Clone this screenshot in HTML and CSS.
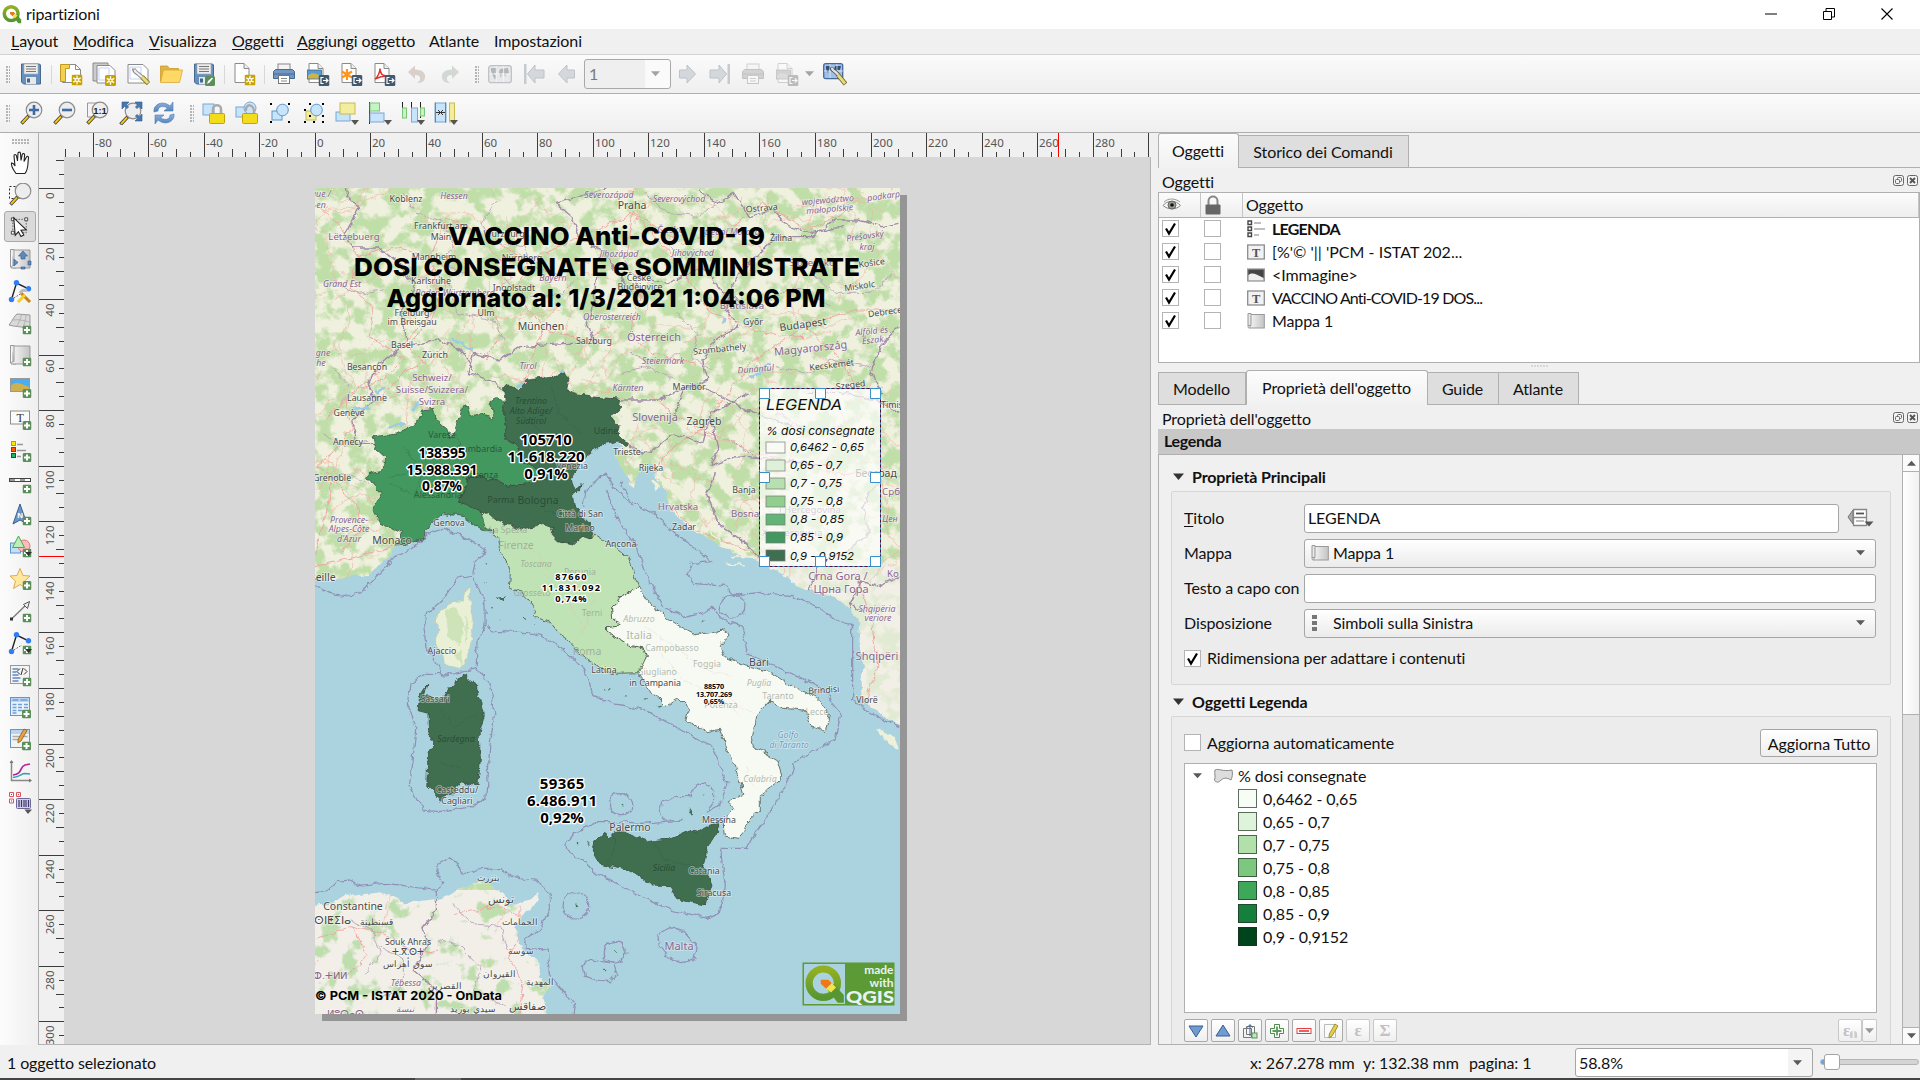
FILE: index.html
```html
<!DOCTYPE html>
<html lang="it">
<head>
<meta charset="utf-8">
<title>ripartizioni</title>
<link rel="stylesheet" href="styles.css">
</head>
<body>
<svg class="defs" width="0" height="0">
  <defs>
    <linearGradient id="gArrow" x1="0" y1="0" x2="0" y2="1"><stop offset="0" stop-color="#8fb2da"/><stop offset="1" stop-color="#4f82bd"/></linearGradient>
    <linearGradient id="gRoll"><stop offset="0" stop-color="#f4f4f4"/><stop offset="1" stop-color="#c4c4c4"/></linearGradient>
    <linearGradient id="gQ" x1="0" y1="0" x2="0" y2="1"><stop offset="0" stop-color="#93b023"/><stop offset="1" stop-color="#589632"/></linearGradient>
    <symbol id="b-plus" viewBox="0 0 9 9"><rect width="9" height="9" rx="1.5" fill="#5a8f5a"/><path d="M4.5 1.5v6M1.5 4.5h6" stroke="#fff" stroke-width="2"/></symbol>
    <symbol id="b-new" viewBox="0 0 11 11"><rect width="11" height="11" rx="1.5" fill="#c8a300"/><path d="M5.5 1.3v8.4M1.8 3.4l7.4 4.2M9.2 3.4L1.8 7.6" stroke="#fff" stroke-width="1.3"/><circle cx="5.5" cy="5.5" r="2" fill="#fff"/><circle cx="5.5" cy="5.5" r="1" fill="#c8a300"/></symbol>
    <symbol id="b-exp" viewBox="0 0 11 11"><rect width="11" height="11" rx="1.5" fill="#415a70"/><path d="M5 2.5H2.5v6H5M4.500 5.500h5M7.300 3.300l2.200 2.200-2.200 2.200" stroke="#fff" stroke-width="1.200" fill="none"/></symbol>
    <symbol id="sheet" viewBox="0 0 24 24"><path d="M5 1.500h9l5 5v14H5z" fill="#fff" stroke="#8a8a8a"/><path d="M14 1.500v5h5" fill="#eee" stroke="#8a8a8a"/></symbol>
    <symbol id="lens" viewBox="0 0 24 24"><path d="M10 14.500L2.500 22.500" stroke="#333" stroke-width="3.400"/><path d="M9 15.500L3 22" stroke="#f0c21c" stroke-width="2"/><circle cx="15" cy="9" r="7.800" fill="#ededed" stroke="#8c8c8c" stroke-width="1.200"/></symbol>
    <symbol id="save" viewBox="0 0 24 24"><path d="M2.500 2h18l1 1v19h-17l-2-2z" fill="#6690be" stroke="#48698f"/><rect x="5" y="2" width="14" height="10" fill="#ededed" stroke="#aaa" stroke-width=".6"/><path d="M7 4.500h10M7 7h10M7 9.500h10" stroke="#777" stroke-width="1"/><rect x="7" y="15" width="10" height="7" fill="#e8e8e8"/><rect x="8" y="16.500" width="3" height="4" fill="#44658c"/></symbol>
    <symbol id="saveas" viewBox="0 0 24 24"><use href="#save"/><rect x="13" y="14" width="10" height="10" rx="1.500" fill="#5a8f5a"/><path d="M15 22l1-3 4-3.500 1 1-3.500 4z" fill="#fff"/></symbol>
    <symbol id="newlay" viewBox="0 0 24 24"><path d="M3.500 2.500h13l5 5v13h-18z" fill="#fff" stroke="#8a8a8a"/><path d="M16.500 2.500v5h5" fill="none" stroke="#8a8a8a"/><path d="M1.500 2.500h9v4h-4v13h-5z" fill="#f3d04e" stroke="#c09a20"/><use href="#b-new" x="12.500" y="12.500" width="11" height="11"/></symbol>
    <symbol id="duplay" viewBox="0 0 24 24"><path d="M1 1h15v18H1z" fill="#ccc" stroke="#8a8a8a"/><path d="M5 3.500h13l5 5V21H5z" fill="#fff" stroke="#8a8a8a"/><path d="M7 6h10v12H7z" fill="none" stroke="#c6d2fa"/><use href="#b-new" x="13" y="13" width="11" height="11"/></symbol>
    <symbol id="mgr" viewBox="0 0 24 24"><path d="M2 2.500h15l5 5V21H2z" fill="#fff" stroke="#8a8a8a"/><path d="M4 5h11v12H4z" fill="none" stroke="#c6d2fa"/><path d="M8 6.500c0 4 3 4 4.500 5.500L18 17" stroke="#8a8a8a" stroke-width="4" fill="none"/><path d="M8.500 7.500c0 3 3 3 4.500 5l3.500 3" stroke="#eee" stroke-width="2.200" fill="none"/><path d="M16 15l6.500 6.500" stroke="#8d7a2c" stroke-width="4.600"/><path d="M16 15l6 6" stroke="#eadb7e" stroke-width="2.800"/></symbol>
    <symbol id="folder" viewBox="0 0 24 24"><path d="M1.500 20V4h7l2 2.500h9V9" fill="#e0b443" stroke="#c99a2a" stroke-width=".8"/><path d="M1.500 20.500L4.500 8h19l-3 12.500z" fill="#ffd865" stroke="#d8aa38" stroke-width=".8"/></symbol>
    <symbol id="addpage" viewBox="0 0 24 24"><use href="#sheet" x="-2"/><use href="#b-new" x="12.500" y="12.500" width="11" height="11"/></symbol>
    <symbol id="print" viewBox="0 0 24 24"><rect x="6" y="2" width="12" height="7" fill="#f4f4f4" stroke="#888"/><path d="M3.500 7.500h17l2 2v7h-21v-7z" fill="#7297c2" stroke="#496a91"/><path d="M2 12h20" stroke="#496a91"/><rect x="6.500" y="13.500" width="11" height="8" fill="#fff" stroke="#777"/><path d="M9 16.500h6M9 19h6" stroke="#888"/></symbol>
    <symbol id="eximg" viewBox="0 0 24 24"><use href="#sheet" x="-2"/><rect x="1.500" y="8" width="14" height="9" fill="#4f9fe0" stroke="#555" stroke-width=".7"/><path d="M2 16.500v-3c4-4 8-2 13 0v3z" fill="#cfb24a"/><use href="#b-exp" x="12.500" y="13" width="11" height="11"/></symbol>
    <symbol id="exsvg" viewBox="0 0 24 24"><use href="#sheet" x="-2"/><path d="M8 7v11M3 9.500l10 6M13 9.500l-10 6" stroke="#ff9418" stroke-width="2.200"/><use href="#b-exp" x="12.500" y="13" width="11" height="11"/></symbol>
    <symbol id="expdf" viewBox="0 0 24 24"><use href="#sheet" x="-2"/><path d="M3 17c3-2 5-7 5-10.500C8 12 11 14 15 14c-4 0-8 1-12 3" stroke="#e0322c" stroke-width="1.500" fill="none"/><use href="#b-exp" x="12.500" y="13" width="11" height="11"/></symbol>
    <symbol id="undo" viewBox="0 0 24 24"><path d="M3 10l7-6.500v4C17 7.500 21 11 20 16c-1 4-4 5-8 5 4-2 5-8-2-8v4z" fill="#d9d0cb"/></symbol>
    <symbol id="redo" viewBox="0 0 24 24"><path d="M21 10l-7-6.500v4C7 7.500 3 11 4 16c1 4 4 5 8 5-4-2-5-8 2-8v4z" fill="#d4d8d4"/></symbol>
    <symbol id="world" viewBox="0 0 24 24"><rect x=".7" y="3.700" width="22.600" height="17" rx="2.500" fill="#e6e8ea" stroke="#bfc1c4" stroke-width="1.300"/><path d="M3 6l6 0-1 5-2 0 2 3-1 4-2-4-2-5zM12 7l8-1 1 5-3 1-1 3-1-4-2 0-1 5-2-6z" fill="#b4b6b8"/><path d="M8.300 4v16M15.600 4v16M1 12h22" stroke="#f6f6f6" stroke-width=".8"/></symbol>
    <symbol id="worldset" viewBox="0 0 24 24"><rect x=".7" y="1.700" width="19" height="15" rx="2" fill="#9fc1e6" stroke="#44699a" stroke-width="1.300"/><path d="M3 4h4l-1 4-1 3-2-4zM12 4l6 0-1 4-3 0-1 4-2-4z" fill="#34507a"/><path d="M7 2v14M14 2v14M1 9h19" stroke="#e8f0fa" stroke-width=".7"/><path d="M8.500 5.500c0 3 3 3 4 4.500l3 3" stroke="#555" stroke-width="4" fill="none"/><path d="M9 6c0 3 3 3 4 4.500l3 3" stroke="#e4e4e4" stroke-width="2.400" fill="none"/><path d="M15 13l7.500 9" stroke="#6d642c" stroke-width="4.600"/><path d="M15 13l7 8.500" stroke="#eed97a" stroke-width="2.800"/></symbol>
    <symbol id="a-left" viewBox="0 0 24 24"><path d="M3.500 12L12 3v5h7.500v8H12v5z" fill="#d4d8dc" stroke="#bec3c8"/></symbol>
    <symbol id="a-first" viewBox="0 0 24 24"><rect x="2" y="2" width="2.500" height="20" fill="#c6cace"/><path d="M5.500 12L13 3v5h9v8h-9v5z" fill="#d4d8dc" stroke="#bec3c8"/></symbol>
    <symbol id="tri" viewBox="0 0 8 5"><path d="M0 0h8L4 4.600z" fill="currentColor"/></symbol>
    <symbol id="zin" viewBox="0 0 24 24"><use href="#lens"/><path d="M15 4v10M10 9h10" stroke="#3f6ca6" stroke-width="2.600"/></symbol>
    <symbol id="zout" viewBox="0 0 24 24"><use href="#lens"/><path d="M10 9h10" stroke="#3f6ca6" stroke-width="2.600"/></symbol>
    <symbol id="z11" viewBox="0 0 24 24"><path d="M2.500 2h12v14h-12z" fill="#f4f4f4" stroke="#999"/><use href="#lens"/><text x="15" y="12.600" text-anchor="middle" font-size="9.500" font-weight="700" font-family="Liberation Sans, sans-serif" fill="#222">1:1</text></symbol>
    <symbol id="zfull" viewBox="0 0 24 24"><use href="#lens" x="-1" y="1"/><path d="M3 1h7L3 8zM23 1h-7l7 7zM23 20h-7l7-7z" fill="#4878b0" stroke="#2d578a" stroke-width=".6"/><path d="M5 3l4 4M21 3l-4 4M21 18l-4-4" stroke="#4878b0" stroke-width="3"/></symbol>
    <symbol id="refresh" viewBox="0 0 24 24"><path d="M2 11C1 3 11-1 18 5l3-4v9h-9l3.500-3C10 4 6 6 6 10z" fill="url(#gArrow)" stroke="#4b7bb5" stroke-width=".6"/><path d="M22 13c1 8-9 12-16 6l-3 4v-9h9l-3.500 3c5.500 3 9.500 1 9.500-3z" fill="url(#gArrow)" stroke="#4b7bb5" stroke-width=".6"/></symbol>
    <symbol id="lock" viewBox="0 0 24 24"><rect x="1" y="3" width="11" height="11" fill="#c7e4fb" stroke="#7aa8cf"/><path d="M11 13V8c0-5 8-5 8 0v5" fill="none" stroke="#aaa" stroke-width="2.600"/><rect x="7.500" y="12.500" width="15" height="10" rx="1" fill="#f2dc1c" stroke="#c0a408"/></symbol>
    <symbol id="unlock" viewBox="0 0 24 24"><rect x="1" y="6" width="11" height="10" fill="#c7e4fb" stroke="#7aa8cf"/><circle cx="15" cy="7" r="6" fill="#c7e4fb" stroke="#7aa8cf"/><path d="M11 10c-1-8 9-8 8 3" fill="none" stroke="#aaa" stroke-width="2.400"/><rect x="7.500" y="12.500" width="15" height="10" rx="1" fill="#f2dc1c" stroke="#c0a408"/></symbol>
    <symbol id="grp" viewBox="0 0 24 24"><rect x="4" y="10" width="10" height="9" fill="#c7e4fb" stroke="#5d96c8"/><circle cx="14.500" cy="9" r="5.800" fill="#c7e4fb" stroke="#5d96c8"/><path d="M2 2h2v2H2zM20 2h2v2h-2zM2 20h2v2H2zM20 20h2v2h-2z"/></symbol>
    <symbol id="ungrp" viewBox="0 0 24 24"><rect x="4" y="10" width="10" height="9" fill="#f3eda0" stroke="#c8bb50"/><circle cx="14.500" cy="9" r="5.800" fill="#c7e4fb" stroke="#5d96c8"/><path d="M7 2h2v2H7zM20 2h2v2h-2zM2 8h2v2H2zM2 20h2v2H2zM11 20h2v2h-2zM20 20h2v2h-2zM20 14h2v2h-2zM7 14h2v2H7z"/></symbol>
    <symbol id="raise" viewBox="0 0 24 24"><rect x="1" y="11" width="14" height="9" fill="#c7e4fb" stroke="#7aa8cf"/><rect x="5" y="2" width="15" height="11" fill="#f3eda0" stroke="#c8bb50"/><path d="M16 19h8l-4 5z" fill="#555"/></symbol>
    <symbol id="align" viewBox="0 0 24 24"><path d="M1.500 1v22" stroke="#222"/><rect x="2" y="2" width="9.500" height="8" fill="#c4f3c4" stroke="#7cc47c"/><rect x="2" y="12" width="14" height="9" fill="#c7e4fb" stroke="#7aa8cf"/><path d="M16 19h8l-4 5z" fill="#555"/></symbol>
    <symbol id="distr" viewBox="0 0 24 24"><path d="M1.500 1v16M10.500 1v6M19.500 1v16" stroke="#222"/><rect x="1.500" y="7" width="4" height="10" fill="#c4f3c4" stroke="#7cc47c"/><rect x="10.500" y="7" width="6" height="14" fill="#c7e4fb" stroke="#7aa8cf"/><rect x="19.500" y="7" width="4" height="8" fill="#c4f3c4" stroke="#7cc47c"/><path d="M16 19h8l-4 5z" fill="#555"/></symbol>
    <symbol id="resize" viewBox="0 0 24 24"><rect x="1" y="2" width="11" height="19" fill="#c7e4fb" stroke="#7aa8cf"/><path d="M1.500 1.500v20M11.500 1.500v20" stroke="#5d8ab5"/><path d="M2 11.500h4M11 11.500H7M4 9l2.500 2.500L4 14M9 9l-2.500 2.500L9 14" stroke="#333" fill="none"/><rect x="15.500" y="2" width="5" height="19" fill="#f3eda0" stroke="#c8bb50"/><path d="M16 19h8l-4 5z" fill="#555"/></symbol>
    <symbol id="pan" viewBox="0 0 24 24"><path d="M8 22.500C6 19 3 16.500 3.500 12c1.500-.5 2.500 1 3.500 3L6 5c0-2 2-2 2.500 0l1 5L10 2.500c0-1.800 2.500-1.800 2.500 0l.5 7 1.300-6c.5-1.600 2.500-1 2.300.5L16 10.500 18.500 6c.8-1.400 2.300-.5 2 1C19.500 12 21 17 17 22.500z" fill="#fff" stroke="#222" stroke-width="1.100"/></symbol>
    <symbol id="zoomsel" viewBox="0 0 24 24"><path d="M1.500 3.500h12v12h-12z" fill="none" stroke="#222" stroke-dasharray="2 2"/><use href="#lens" y="-1"/></symbol>
    <symbol id="selitem" viewBox="0 0 24 24"><path d="M4.500 4.500h14v14h-14z" fill="none" stroke="#555" stroke-dasharray="1.500 1.500"/><path d="M3 3h3v3H3zM17 3h3v3h-3zM3 17h3v3H3z" fill="#fff" stroke="#444"/><path d="M5.500 3l13 12.500-5.500.3 3 5-3 1.700-2.700-5.200-3.300 4z" fill="#fff" stroke="#222" stroke-width="1.100"/></symbol>
    <symbol id="roll" viewBox="0 0 24 24"><path d="M5 3h17v18H5z" fill="url(#gRoll)" stroke="#999"/><path d="M2.500 2.500H6v16c-2 0-3 1-3 2.500h5M2.500 2.500V20" fill="#ededed" stroke="#999"/></symbol>
    <symbol id="mvcont" viewBox="0 0 24 24"><use href="#roll"/><path d="M15 4l4.500 5H17v3h-4V9h-2.500zM6 12l4 3.500L6 19zM23 14h-3v4h3zM13 20h4v2h-4z" fill="#5b89c0" stroke="#3d6593" stroke-width=".7"/></symbol>
    <symbol id="nodes" viewBox="0 0 24 24"><path d="M3.500 20.500L8.500 4l12.500 6" fill="none" stroke="#222" stroke-width="1.400"/><path d="M3.500 20.500L14 14" stroke="#555" stroke-dasharray="1.500 1.500"/><circle cx="3.500" cy="20.500" r="2.700" fill="#2e7df6"/><circle cx="8.500" cy="3.700" r="2.700" fill="#2e7df6"/><circle cx="20.500" cy="9.700" r="2.700" fill="#2e7df6"/></symbol>
    <symbol id="editnodes" viewBox="0 0 24 24"><use href="#nodes"/><path d="M13 14l9 9" stroke="#c98511" stroke-width="3"/><path d="M17 16l-7 7" stroke="#f2cf2c" stroke-width="3"/><path d="M12 14c2-3 5-3 7-2" stroke="#bbb" stroke-width="3" fill="none"/></symbol>
    <symbol id="p3d" viewBox="0 0 24 24"><path d="M1 14C5 9 6 5 9 3l13 1v14l-5-1C12 15 7 16 1 14z" fill="#d9d9d9" stroke="#999"/><path d="M5 9c6-1 12 1 17 2M14 3c-2 5-3 9-5 12M18 4c0 5-2 9-3 13" stroke="#aaa" fill="none" stroke-width=".8"/><use href="#b-plus" x="14.500" y="14.500" width="9" height="9"/></symbol>
    <symbol id="addmap" viewBox="0 0 24 24"><use href="#roll"/><use href="#b-plus" x="14.500" y="14.500" width="9" height="9"/></symbol>
    <symbol id="addpic" viewBox="0 0 24 24"><rect x="2.500" y="3.500" width="19" height="13" fill="#4dacf0" stroke="#999"/><path d="M3 16V11c4-5 8-3 18 1v4z" fill="#cbb150"/><use href="#b-plus" x="14.500" y="14" width="9" height="9"/></symbol>
    <symbol id="addlab" viewBox="0 0 24 24"><rect x="2.500" y="4" width="19" height="13" fill="#fafafa" stroke="#8e8e8e"/><text x="12" y="14.500" font-size="12" font-family="Liberation Serif, serif" text-anchor="middle" fill="#333">T</text><use href="#b-plus" x="14.500" y="14" width="9" height="9"/></symbol>
    <symbol id="addleg" viewBox="0 0 24 24"><rect x="3.500" y="2.500" width="4" height="4" fill="#ffe600" stroke="#e08a00"/><rect x="3.500" y="8.500" width="4" height="4" fill="#ff5a00" stroke="#b82800"/><rect x="3.500" y="14.500" width="4" height="4" fill="#1cb46a" stroke="#0b5c30"/><path d="M9 5.500h6M9 11.500h9M9 17.500h4" stroke="#999" stroke-width="1.500"/><use href="#b-plus" x="14.500" y="14" width="9" height="9"/></symbol>
    <symbol id="addbar" viewBox="0 0 24 24"><rect x="1.500" y="7.500" width="21" height="3" fill="#fff" stroke="#444"/><path d="M2 9h5M12 9h5" stroke="#999" stroke-width="2"/><use href="#b-plus" x="14.500" y="13.500" width="9" height="9"/></symbol>
    <symbol id="addnorth" viewBox="0 0 24 24"><path d="M12 1l7 20-7-4-7 4z" fill="#6a97c8" stroke="#3c5f8a"/><text x="12" y="15" font-size="8" font-weight="700" font-family="Liberation Sans, sans-serif" text-anchor="middle" fill="#fff">N</text><use href="#b-plus" x="14.500" y="13.500" width="9" height="9"/></symbol>
    <symbol id="addshape" viewBox="0 0 24 24"><rect x="2.500" y="8" width="10" height="10" fill="#bfe0fa" stroke="#5d96c8"/><circle cx="16" cy="11" r="6" fill="#fbb" stroke="#d77"/><path d="M10.500 1l6 11.500h-12z" fill="#b9efb9" stroke="#52a552"/><use href="#b-plus" x="14.500" y="13.500" width="9" height="9"/><path d="M17 17h7l-3.500 4z" fill="#333"/></symbol>
    <symbol id="addmark" viewBox="0 0 24 24"><path d="M12 1.500l3 7 7 .5-5.500 5 2 7.500L12 17.500 5.500 21.500l2-7.500L2 9l7-.5z" fill="#ffe9a0" stroke="#dfa94e"/><use href="#b-plus" x="14.500" y="14" width="9" height="9"/></symbol>
    <symbol id="addarrow" viewBox="0 0 24 24"><path d="M3.500 20L19 5" stroke="#777" stroke-width="1.300"/><path d="M21.500 2.500l-2 7-4-4z" fill="#eee" stroke="#555"/><rect x="2" y="18.500" width="3" height="3" fill="#333"/><use href="#b-plus" x="14.500" y="14.500" width="9" height="9"/></symbol>
    <symbol id="addnode" viewBox="0 0 24 24"><use href="#nodes"/><use href="#b-plus" x="14.500" y="14.500" width="9" height="9"/><path d="M17 18h7l-3.500 4z" fill="#333"/></symbol>
    <symbol id="addhtml" viewBox="0 0 24 24"><rect x="2.500" y="2.500" width="19" height="18" fill="#f4f4f4" stroke="#999"/><path d="M4.500 6h6M4.500 9h4M4.500 12h6M4.500 15h8M4.500 18h6" stroke="#5b89c8" stroke-width="1.500"/><path d="M12 5.500L9 8.500l3 3M16 5.500l3 3-3 3M15 5l-2 7" stroke="#333" fill="none"/><use href="#b-plus" x="14.500" y="14.500" width="9" height="9"/></symbol>
    <symbol id="addtab" viewBox="0 0 24 24"><rect x="2.500" y="2.500" width="19" height="18" fill="#eaf3fc" stroke="#6a94c4"/><rect x="3" y="3" width="18" height="4" fill="#b7d5f2"/><path d="M4.500 5h6M12.500 5h7M4.500 9.500h4M10 9.500h4M16 9.500h4M4.500 12.500h4M10 12.500h4M16 12.500h4M4.500 15.500h4M10 15.500h4M4.500 18h4" stroke="#6f9fd8" stroke-width="1.300"/><use href="#b-plus" x="14" y="14.500" width="9" height="9"/></symbol>
    <symbol id="addfix" viewBox="0 0 24 24"><rect x="2.500" y="2.500" width="19" height="18" fill="#f2f2f2" stroke="#6a94c4"/><rect x="3" y="3" width="18" height="4" fill="#b7d5f2"/><path d="M4.500 9.500h15M4.500 12.500h8" stroke="#aaa" stroke-width="1.300"/><path d="M16 2l3 1.500-6 10.500-3 2 0-3.500z" fill="#e9a441" stroke="#865c1d" stroke-width=".8"/><use href="#b-plus" x="14" y="14.500" width="9" height="9"/></symbol>
    <symbol id="chart" viewBox="0 0 24 24"><path d="M3.500 2v19.500h19" fill="none" stroke="#888" stroke-width="1.500"/><path d="M1.500 4l2-3 2 3zM21 19.500l3 2-3 2z" fill="#777"/><path d="M5 16c10-1 6-8 12-10l5-1" fill="none" stroke="#b8239b" stroke-width="1.700"/><path d="M5 18.500c8-1 8-4 12-4l5 .5" fill="none" stroke="#32a0b8" stroke-width="1.500"/></symbol>
    <symbol id="barcode" viewBox="0 0 24 24"><path d="M1.500 1.500h4v4h-4zM8.500 1.500h4v4h-4zM1.500 8h4v4h-4z" fill="#fff" stroke="#d95360"/><path d="M3 3h1v1H3zM10 3h1v1h-1zM3 9.500h1v1H3z" fill="#d22"/><rect x="8.500" y="7.500" width="14" height="10" rx="1" fill="#d6d2e8" stroke="#6d6796"/><path d="M11 9v7M13.500 9v7M16 9v7M18 9v7M20.500 9v7" stroke="#3b356e" stroke-width="1.200"/><path d="M16.500 18.500h7.500l-4 4.500z" fill="#555"/></symbol>
    <symbol id="t-leg" viewBox="0 0 18 18"><path d="M1 1h3.500v3.500H1zM1 7h3.500v3.500H1zM1 13h3.500v3.500H1z" fill="#fff" stroke="#444" stroke-width="1.400"/><path d="M7 3h7M7 9h11M7 15h5" stroke="#aaa" stroke-width="1.700"/></symbol>
    <symbol id="t-lab" viewBox="0 0 18 18"><rect x=".7" y="2" width="16.600" height="14" fill="#f2f2f2" stroke="#8c8c8c" stroke-width="1.300"/><text x="9" y="13.500" font-size="12.500" font-weight="700" font-family="Liberation Serif, serif" text-anchor="middle" fill="#555">T</text></symbol>
    <symbol id="t-img" viewBox="0 0 18 18"><rect x=".7" y="3" width="16.600" height="12" fill="#444" stroke="#999" stroke-width="1.300"/><path d="M1.400 14.400V9.500C4 5.500 9 8 16.600 12v2.400z" fill="#eee"/></symbol>
    <symbol id="t-map" viewBox="0 0 18 18"><rect x="3" y="2.500" width="14.300" height="13.500" fill="url(#gRoll)" stroke="#999"/><path d="M1 1.500h3v12H1zM1 13.500c0 2 0 2.500 2 2.500" fill="#e6e6e6" stroke="#999"/></symbol>
    <symbol id="float" viewBox="0 0 11 11"><rect x=".5" y=".5" width="10" height="10" rx="2" fill="#f4f4f4" stroke="#666"/><rect x="4.500" y="2.500" width="4" height="4" rx="1" fill="none" stroke="#666"/><rect x="2.500" y="4.500" width="4" height="4" rx="1" fill="#f4f4f4" stroke="#666"/></symbol>
    <symbol id="closeb" viewBox="0 0 11 11"><rect x=".5" y=".5" width="10" height="10" rx="2" fill="#f4f4f4" stroke="#666"/><path d="M3 3l5 5M8 3L3 8" stroke="#555" stroke-width="1.900"/></symbol>
    <symbol id="check" viewBox="0 0 17 17"><path d="M4 8.500l3 5L13 3.500" fill="none" stroke="#000" stroke-width="2.200"/></symbol>
    <symbol id="qlogo" viewBox="0 0 24 24"><circle cx="11" cy="11.500" r="8.300" fill="none" stroke="url(#gQ)" stroke-width="4.200"/><path d="M13.500 15.500l3.500-3.500 6 6.500v4.500h-3.500z" fill="#589632"/><path d="M9.500 9.500h4.500l2 2-3.300 3.300-3.200-3z" fill="#ee7913"/><path d="M12.700 14.800l3.300-3.300 2.500 2.500-3 3z" fill="#f0e64a"/></symbol>
  </defs>
</svg>

<div class="window">
  <header class="titlebar">
    <svg class="applogo"><use href="#qlogo"/></svg>
    <span class="apptitle">ripartizioni</span>
    <svg class="winbtn" viewBox="0 0 12 12"><path d="M0 6h12" stroke="#000"/></svg>
    <svg class="winbtn" viewBox="0 0 12 12"><path d="M.5 3.500h8v8h-8zM3 3V.5h8.500V9H9" fill="none" stroke="#000"/></svg>
    <svg class="winbtn" viewBox="0 0 12 12"><path d="M.5.5l11 11M11.500.5l-11 11" stroke="#000" stroke-width="1.100"/></svg>
  </header>
  <nav class="menubar">
    <span><u>L</u>ayout</span><span><u>M</u>odifica</span><span><u>V</u>isualizza</span><span><u>O</u>ggetti</span><span><u>A</u>ggiungi oggetto</span><span>Atlante</span><span>Impostazioni</span>
  </nav>
  <div class="toolbar">
    <i class="grip"></i>
    <svg class="ic"><use href="#save"/></svg><i class="sep"></i>
    <svg class="ic"><use href="#newlay"/></svg><svg class="ic"><use href="#duplay"/></svg><svg class="ic"><use href="#mgr"/></svg><svg class="ic"><use href="#folder"/></svg><svg class="ic"><use href="#saveas"/></svg><i class="sep"></i>
    <svg class="ic"><use href="#addpage"/></svg><i class="sep"></i>
    <svg class="ic"><use href="#print"/></svg><svg class="ic"><use href="#eximg"/></svg><svg class="ic"><use href="#exsvg"/></svg><svg class="ic"><use href="#expdf"/></svg><svg class="ic"><use href="#undo"/></svg><svg class="ic"><use href="#redo"/></svg>
    <i class="grip second"></i>
    <svg class="ic"><use href="#world"/></svg><svg class="ic"><use href="#a-first"/></svg><svg class="ic"><use href="#a-left"/></svg>
    <div class="pagebox"><span>1</span><svg class="tri dim"><use href="#tri"/></svg></div>
    <svg class="ic flip"><use href="#a-left"/></svg><svg class="ic flip"><use href="#a-first"/></svg><svg class="ic faded"><use href="#print"/></svg><svg class="ic faded"><use href="#eximg"/></svg>
    <svg class="tri dim"><use href="#tri"/></svg><svg class="ic last"><use href="#worldset"/></svg>
  </div>
  <div class="toolbar">
    <i class="grip"></i>
    <svg class="ic"><use href="#zin"/></svg><svg class="ic"><use href="#zout"/></svg><svg class="ic"><use href="#z11"/></svg><svg class="ic"><use href="#zfull"/></svg><svg class="ic"><use href="#refresh"/></svg>
    <i class="grip third"></i>
    <svg class="ic"><use href="#lock"/></svg><svg class="ic"><use href="#unlock"/></svg><svg class="ic"><use href="#grp"/></svg><svg class="ic"><use href="#ungrp"/></svg><svg class="ic"><use href="#raise"/></svg><svg class="ic"><use href="#align"/></svg><svg class="ic"><use href="#distr"/></svg><svg class="ic"><use href="#resize"/></svg>
  </div>

  <main class="main">
    <aside class="tools">
      <i class="hgrip"></i>
      <svg><use href="#pan"/></svg><svg><use href="#zoomsel"/></svg><svg class="on"><use href="#selitem"/></svg><svg><use href="#mvcont"/></svg><svg><use href="#editnodes"/></svg><svg><use href="#p3d"/></svg><svg><use href="#addmap"/></svg><svg><use href="#addpic"/></svg><svg><use href="#addlab"/></svg><svg><use href="#addleg"/></svg><svg><use href="#addbar"/></svg><svg><use href="#addnorth"/></svg><svg><use href="#addshape"/></svg><svg><use href="#addmark"/></svg><svg><use href="#addarrow"/></svg><svg><use href="#addnode"/></svg><svg><use href="#addhtml"/></svg><svg><use href="#addtab"/></svg><svg><use href="#addfix"/></svg><svg><use href="#chart"/></svg><svg><use href="#barcode"/></svg>
    </aside>
    <section class="view">
      <svg class="hruler" id="hruler" width="1111" height="24"></svg>
      <svg class="vruler" id="vruler" width="25" height="888"></svg>
      <div class="canvas">
        <svg class="sheet" width="585" height="826" viewBox="315 188 585 826">
          <defs>
            <filter id="veg" x="0" y="0" width="100%" height="100%" color-interpolation-filters="sRGB"><feTurbulence type="fractalNoise" baseFrequency=".06" numOctaves="6" seed="7"/><feColorMatrix values="0 0 0 0 .75  0 0 0 0 .87  0 0 0 0 .66  6 0 0 0 -2.6"/></filter>
            <filter id="dry" x="0" y="0" width="100%" height="100%" color-interpolation-filters="sRGB"><feTurbulence type="fractalNoise" baseFrequency=".05" numOctaves="4" seed="11"/><feColorMatrix values="0 0 0 0 .75  0 0 0 0 .87  0 0 0 0 .68  8 0 0 0 -4.500"/></filter>
            <filter id="rough" filterUnits="userSpaceOnUse" x="305" y="178" width="605" height="846" color-interpolation-filters="sRGB"><feTurbulence type="fractalNoise" baseFrequency=".11" numOctaves="3" seed="4"/><feDisplacementMap in="SourceGraphic" scale="7" xChannelSelector="R" yChannelSelector="G"/></filter>
            <path id="south" d="M845 1220L870 1270 935 1330 985 1362 1060 1350 1080 1365 1052 1400 1065 1430 1120 1455 1190 1480 1250 1525 1300 1550 1335 1600 1325 1655 1290 1635 1270 1590 1215 1585 1185 1560 1150 1600 1135 1680 1140 1700 1200 1740 1208 1770 1215 1795 1155 1850 1155 1890 1125 1920 1115 1955 1100 1975 1065 1968 1062 1925 1090 1890 1078 1865 1115 1840 1098 1780 1085 1740 1070 1700 1050 1645 1020 1655 968 1622 975 1590 945 1556 915 1578 900 1560 880 1540 845 1478 865 1430 860 1405 820 1395 800 1380 765 1355 765 1340 795 1335 778 1315 775 1280 790 1270 795 1250z"/>
            <path id="centre" d="M440 995L455 993 480 1020 510 1035 550 1050 600 1030 625 1040 620 1060 640 1085 675 1095 700 1070 725 1080 735 1065 790 1105 815 1130 845 1220 795 1250 790 1270 775 1280 778 1315 795 1335 765 1340 765 1355 800 1380 820 1395 860 1405 865 1430 850 1478 775 1480 740 1460 700 1430 660 1375 640 1360 620 1330 575 1308 580 1295 560 1258 535 1230 513 1222 515 1180 508 1155 490 1110 485 1075 470 1055 450 1040z"/>
            <path id="ne" d="M495 620L512 618 535 630 560 600 620 592 655 578 665 600 660 625 690 645 720 650 798 658 795 690 775 712 795 740 790 760 800 772 822 795 810 800 790 780 765 790 730 812 690 850 672 900 682 930 700 910 690 930 675 945 680 980 705 1020 725 1045 730 1060 725 1080 700 1070 675 1095 640 1085 620 1060 625 1040 600 1030 550 1050 510 1035 480 1020 440 995 385 965 400 925 402 900 440 890 490 905 512 918 560 910 610 895 590 870 555 850 530 790 505 780 498 700 500 665z"/>
            <path id="nw" d="M160 770L225 762 275 730 290 690 315 685 325 720 350 745 362 780 378 740 392 680 405 682 410 710 440 700 470 718 465 665 482 655 500 665 498 700 505 780 530 790 555 850 590 870 610 895 560 910 512 918 490 905 440 890 402 900 400 925 385 965 440 995 475 1055 450 1055 395 1010 345 1000 310 1035 290 1075 260 1090 222 1095 238 1060 180 1030 162 990 185 940 145 890 150 880 188 870 192 830 172 810z"/>
          </defs>
          <rect x="315" y="188" width="585" height="826" fill="#f0f0de"/>
          <rect x="315" y="188" width="585" height="720" filter="url(#veg)"/>
          <rect x="315" y="890" width="260" height="124" fill="#f2efe9"/>
          <rect x="315" y="890" width="260" height="124" filter="url(#dry)"/>
          <g filter="url(#rough)"><g transform="translate(310 180) scale(.389 .33333)" stroke-linejoin="round">
            <path d="M1130 1130l110 -40 140 60 160 0v520l-90 0z" fill="#f2efe9" opacity=".65"/>
            <path class="road minor" id="minor"/>
            <path class="road" d="M0 60l72 70 50 100 -20 90 60 60 -10 90 90 70 -60 60 -80 40 -60 80M120 230l100 -30 80 30 50 90 -40 100 -70 90M350 110l-40 120 20 150 -90 110 60 60M350 110l120 70 90 60 -30 110 80 100 100 30 60 -40M560 240l120 -60 150 -80 130 90 120 -40 80 -80 120 80 110 -60M830 100l-20 140 40 90 -30 130 60 60 110 30M830 100l110 140 90 160 140 60 100 10M1270 440l90 90 60 120 100 30M1270 440l-130 100 -80 120 -50 90M1270 440l120 -50 130 0M1010 750l-90 60 -40 80M1010 750l140 70 200 60 120 0M180 570l-90 90 20 80 -60 90 -35 30M330 520l-90 60 -70 90M600 440l-30 90 -20 100M870 640l60 60 80 50M12 860l50 30 -20 110 -30 120M12 1160l110 -30 60 -20 40 -20M60 900l60 80 10 60 -50 80M540 2180l0 90 -30 60 40 80 -10 90M12 2280l90 -40 80 20 90 60 60 -10M370 2200l120 -20 50 30M110 2240l40 90 -60 60M930 990l60 60 110 50 100 60M1400 1180l40 120 20 160 -30 100 30 110M460 200l60 90 -60 60 30 110 -40 80"/>
            <path class="border" d="M90 14l5 40 30 30 -35 80 20 40 70 0 60 60 30 60 -35 70 15 90M630 70l45 45 20 60 60 40 50 90 20 30M630 70l90 -30 60 -26M830 290l90 20 90 -50 60 90 40 10M1110 270l-30 60 -10 60 30 50 -60 40 -30 60 10 60 -60 30 -20 70M1110 270l40 -40 50 -60 90 0 60 -50 60 0 60 20 40 -10M240 500l90 -20 60 30 30 60M240 500l-60 50 -30 60 20 50 -60 60 10 70 50 0M420 520l70 20 50 -40 120 -10 70 0 -20 -60 20 -60 10 -80M420 520l-15 60 60 20 30 30M700 650l110 10 90 0 70 -40 60 10 90 60 120 50M820 800l50 20 60 -60 80 30 20 -90 100 -60M1030 860l20 -60 -20 -90M1030 860l60 -30 120 10 130 20M1040 880l-20 60 30 90 70 60 60 70M1470 640l-30 -60 30 -90 45 -50M1515 700l-60 -40 -80 -20 -100 0M1460 900l-40 80 20 80 -70 60 -60 20 -30 100M1390 1270l30 30M1515 1190l-60 30 -40 -20 -30 90M325 2140l0 50 -40 60 20 40 -40 80 60 60 0 70 -40 90 10 60M1000 30l50 40 40 -30 40 70 60 -20 40 50 60 20 80 -20"/>
            <path class="border thin" d="M240 40l30 60 60 20 40 60 -20 70 60 40M480 60l-40 70 50 60 60 10 20 60 80 30M60 300l60 40 70 -10M300 260l60 60 20 80 90 20 30 60M500 300l60 50 90 -10 40 -50M860 40l60 60 80 10 50 -50M900 150l40 80M940 400l60 60 -20 70 60 40M820 520l70 30 60 -30M800 580l60 -20 80 40M1200 560l80 20 60 -40 100 20M1290 280l60 60 90 0 60 -60M1180 360l70 -40 90 60M60 560l40 60M30 760l60 40 60 -20M40 900l60 -20 50 30M100 2220l60 30 20 70 -40 60M370 2170l40 60 80 10 20 70M330 2280l60 20 50 60 -20 70 80 50M180 2300l60 40 0 80 -60 40M1080 780l80 60M1200 700l90 60 80 -20"/>
            <path d="M360 480l30 10 30 25M170 640l20 -20M110 690l45 -5M200 745l40 -15M260 690l20 -25M1135 595l50 -45M1060 430l5 -20M530 620l20 -12M640 580l12 -8" class="lake"/>
            <path d="M0 1195L60 1200 100 1190 150 1185 170 1160 205 1135 222 1095 260 1090 290 1075 310 1035 345 1000 395 1010 450 1055 470 1055 485 1075 490 1110 508 1155 515 1180 513 1222 535 1230 560 1258 580 1295 575 1308 620 1330 660 1375 700 1430 740 1460 775 1480 845 1478 880 1540 900 1560 915 1578 945 1556 975 1590 968 1622 1020 1655 1050 1645 1070 1700 1085 1740 1098 1780 1115 1840 1078 1865 1090 1890 1062 1925 1065 1968 1100 1975 1115 1955 1125 1920 1155 1890 1155 1850 1215 1795 1208 1770 1200 1740 1140 1700 1135 1680 1150 1600 1185 1560 1215 1585 1270 1590 1290 1635 1325 1655 1335 1600 1300 1550 1250 1525 1190 1480 1120 1455 1065 1430 1052 1400 1080 1365 1060 1350 985 1362 935 1330 870 1270 845 1220 815 1130 790 1105 735 1065 705 1020 680 980 675 945 682 930 672 900 690 850 730 812 765 790 790 780 800 800 785 825 798 855 815 895 828 925 845 885 872 850 885 855 890 900 915 930 925 990 970 1040 1010 1070 1060 1100 1110 1130 1150 1140 1195 1170 1250 1215 1300 1240 1350 1250 1390 1290 1415 1330 1410 1380 1422 1450 1415 1500 1418 1550 1450 1590 1490 1620 1540 1650V2520H605L610 2490 600 2455 620 2420 590 2390 590 2345 545 2310 525 2240 560 2190 590 2160 582 2138 555 2165 520 2175 495 2140 470 2115 430 2105 400 2120 340 2155 240 2170 220 2150 180 2140 110 2150 90 2135 60 2170 0 2180z" fill="#aad3df"/>
            <path d="M900 880l20 30 30 10 10 50 -20 -30 -30 -20zM880 900l10 30 10 -10zM1060 1100l40 15 30 3M1085 1130l60 5M1070 1150l50 8M1010 1030l50 60M1460 1650l40 20 10 30 -20 -10z" fill="#eef0da" stroke="#eef0da" stroke-width="5"/>
            <path d="M400 1218h9l3 62 8 50-10 80-20 63-45-22-3-30-20-32 7-38-5-41 43-45 27-3z" fill="#eaf0d5" stroke="#c0cbb0" stroke-width="2"/>
            <path d="M350 1290l25 -10 20 60 -10 60 -30 -30zM370 1420l18 -10 5 50zM398 1300l8 40 -4 60" fill="#cfe3b8"/>
            <path class="sea" d="M0 1208L50 1240 100 1248 140 1230 220 1130 260 1110 300 1065 345 1045 400 1075 455 1110 425 1150 418 1185 380 1195 340 1260 300 1300 292 1330 298 1400 340 1485 370 1482 430 1465 432 1380 450 1330 450 1270 420 1190M450 1335L480 1355 560 1358 620 1380 700 1460 730 1550 780 1570 870 1595 1030 1695 1060 1770 1072 1810 1050 1880 1020 1900M370 1482L300 1480 260 1510 250 1570 272 1640 265 1740 255 1820 290 1890 330 1895 420 1880 455 1850 462 1700 475 1600 465 1520 430 1465M840 1100L870 1200 910 1280 965 1312 1010 1300 1035 1280 1060 1315 1110 1340 1125 1420 1200 1460 1310 1520 1365 1600 1350 1680 1240 1750 1245 1770 1170 1920 1120 2005 1055 2005 1068 2120 1050 2200 1020 2215 930 2190 740 2085 700 2040 660 2010 658 1990 680 1960 740 1925 790 1925 850 1930 960 1920M760 930L800 1040 840 1100M705 980L710 930 760 880 780 920 830 980 800 900M1035 1145L980 1150 970 1180 990 1210 1070 1220 1085 1250 1155 1240 1240 1250 1300 1278 1350 1320 1395 1335 1395 1560 1440 1600 1515 1640M1035 1145L960 1080 880 1000 830 970"/>
            <path class="sea" d="M0 2140L50 2130 70 2105 100 2100 130 2115 200 2110 320 2130 345 2110M325 2130V2150M345 2110L325 2080 330 2050 355 2033 380 2045 390 2085 430 2070 490 2065 520 2090 580 2100 615 2140 615 2190 590 2250 555 2275 555 2305 610 2310 615 2380 650 2430 680 2470 675 2520"/>
            <g class="sea"><ellipse cx="1086" cy="1278" rx="32" ry="33"/><ellipse cx="800" cy="1874" rx="30" ry="33"/><ellipse cx="685" cy="2178" rx="34" ry="39"/><ellipse cx="783" cy="2317" rx="29" ry="32"/><path d="M960 1918L910 1920 898 1895 905 1865 940 1850 980 1850 985 1825 1010 1810 1040 1830 1040 1865 1025 1892M900 2300L897 2260 925 2243 960 2255 995 2300 990 2335 960 2350 925 2335zM780 2350L788 2380 770 2405 740 2400 705 2390 700 2355 730 2338z"/></g>
            <use class="reg" href="#nw" fill="#43985f"/><use class="reg" href="#ne" fill="#3f6f4f"/><use class="reg" href="#centre" fill="#bfe3b4"/><use class="reg" href="#south" fill="#f6faf3"/>
            <path class="reg" fill="#3f6f4f" d="M400 1482L412 1500 425 1515 430 1545 440 1560 448 1605 435 1660 438 1740 432 1815 410 1810 385 1805 370 1840 355 1845 335 1860 300 1820 302 1760 305 1720 318 1695 305 1660 303 1600 278 1592 282 1545 300 1512 292 1545 320 1555 350 1540 378 1500zM728 2010L732 1990 755 1960 770 1975 785 1955 810 1950 825 1965 865 1985 930 1975 985 1945 1010 1950 1055 1922 1045 1960 1022 2000 1010 2060 1025 2085 1035 2110 1018 2175 950 2160 925 2120 880 2118 820 2070 745 2050 730 2025z"/>
            <path d="M420 885l60 20M200 910l80 40M300 840l-30 100M240 800l40 60 -80 40M380 760l10 80 -30 60M540 700l60 60M620 620l20 80 60 60M600 990l60 20M330 1580l40 60 60 -40M330 1750l60 10M780 1960l0 60 -20 30M880 1980l30 60 80 20" class="inner"/>
            <path d="M520 1080l60 30 40 80 60 20M600 1180l60 80 40 80M700 1200l30 60 -30 100M860 1340l80 60 60 60 80 30M900 1420l60 80 80 40 60 60M1040 1500l60 80 40 20M1120 1760l20 60" class="inner pale"/>
            <path d="M684 2172l4 5 -3 5zM752 2371l6 1zM977 1887l9 8 -1 8zM1009 1844l3 3zM480 1252l24 -3 -4 8zM800 1873l2 2zM783 2315l2 2zM686 1992l2 2zM713 1991l5 4zM446 1212l1 2zM453 1151l1 1zM470 1282l1 2zM494 1321l1 2zM551 1315l3 3zM573 1331l1 1zM755 1529l1 1zM768 1530l3 -4zM812 1547l1 1zM858 1556l8 1zM895 1581l8 -2zM1008 1326l2 1z" class="islet"/>
          </g></g>
          <g class="cities">
            <text x="406" y="202">Koblenz</text><text x="632" y="209" class="l">Praha</text><text x="762" y="211" transform="rotate(-5 762 211)">Ostrava</text><text x="441" y="229">Frankfurt am</text><text x="441" y="240">Main</text><text x="504" y="237">Würzburg</text><text x="781" y="241">Žilina</text><text x="434" y="260">Mannheim</text><text x="522" y="261">Nürnberg</text><text x="872" y="266" transform="rotate(-8 872 266)">Košice</text><text x="431" y="284">Karlsruhe</text><text x="514" y="291">Ingolstadt</text><text x="639" y="281">České</text><text x="640" y="290">Budějovice</text><text x="860" y="289" transform="rotate(-8 860 289)">Miskolc</text><text x="412" y="316">Freiburg</text><text x="412" y="325">im Breisgau</text><text x="486" y="316">Ulm</text><text x="541" y="330" class="l">München</text><text x="753" y="325">Győr</text><text x="803" y="328" class="l" transform="rotate(-8 803 326)">Budapest</text><text x="888" y="315" transform="rotate(-8 885 314)">Debrecen</text><text x="402" y="348">Basel</text><text x="435" y="358">Zürich</text><text x="594" y="344">Salzburg</text><text x="720" y="352" transform="rotate(-6 720 352)">Szombathely</text><text x="367" y="370">Besançon</text><text x="832" y="368" transform="rotate(-7 832 368)">Kecskemét</text><text x="689" y="390">Maribor</text><text x="851" y="388" transform="rotate(-7 851 388)">Szeged</text><text x="367" y="401">Lausanne</text><text x="349" y="416">Genève</text><text x="348" y="445">Annecy</text><text x="704" y="425" class="l">Zagreb</text><text x="332" y="481">Grenoble</text><text x="627" y="455">Trieste</text><text x="651" y="471">Rijeka</text><text x="744" y="493">Banja</text><text x="876" y="477" class="l">Београд</text><text x="892" y="408">Timiş</text><text x="606" y="434" class="d">Udine</text><text x="572" y="469">Venezia</text>
            <text x="442" y="438" class="d">Varese</text><text x="480" y="452" class="d">Lombardia</text><text x="480" y="478" class="d">Piacenza</text><text x="438" y="498" class="d">Alessandria</text><text x="501" y="503" class="d">Parma</text><text x="538" y="504" class="l d">Bologna</text><text x="580" y="517">Città di San</text><text x="580" y="531">Marino</text><text x="449" y="526">Genova</text><text x="392" y="544" class="l">Monaco</text><text x="621" y="547">Ancona</text><text x="684" y="530">Zadar</text><text x="508" y="533" class="f">La Spezia</text><text x="516" y="549" class="l f">Firenze</text><text x="580" y="575" class="f">Perugia</text><text x="532" y="596" class="f">Grosseto</text><text x="592" y="616" class="f">Terni</text><text x="587" y="655" class="l f">Roma</text><text x="672" y="651" class="f">Campobasso</text><text x="707" y="667" class="f">Foggia</text><text x="657" y="675" class="f">Giugliano</text><text x="655" y="686">in Campania</text><text x="604" y="673">Latina</text><text x="759" y="666" class="l">Bari</text><text x="824" y="693" transform="rotate(-4 824 693)">Brindisi</text><text x="778" y="699" class="f">Taranto</text><text x="721" y="708" class="f">Potenza</text><text x="817" y="715" class="f">Lecce</text><text x="867" y="703">Vlorë</text><text x="435" y="702">Sassari</text><text x="442" y="654">Ajaccio</text><text x="321" y="581" class="l">rseille</text>
            <text x="457" y="793">Casteddu/</text><text x="457" y="804">Cagliari</text><text x="630" y="831" class="l">Palermo</text><text x="719" y="823">Messina</text><text x="704" y="874">Catania</text><text x="714" y="896">Siracusa</text><text x="488" y="881">بنزرت</text><text x="501" y="903" class="l">تونس</text><text x="353" y="910" class="l">Constantine</text><text x="332" y="924" class="l">ⵙⵏⵟⵉⵏⴰ</text><text x="376" y="925">قسنطينة</text><text x="520" y="925">الحمامات</text><text x="408" y="945">Souk Ahras</text><text x="408" y="955">ⵜ.ⴳ.ⵙⵜ</text><text x="408" y="967">سوق أهراس</text><text x="521" y="954">سوسة</text><text x="499" y="977">القيروان</text><text x="540" y="985">المهدية</text><text x="445" y="989">القصرين</text><text x="473" y="1012">سيدي بوزيد</text><text x="527" y="1010" class="l">صفاقس</text>
          </g>
          <g class="places">
            <text x="321" y="197">que /</text><text x="321" y="208">en</text><text x="454" y="199">Hessen</text><text x="609" y="198">Severozápad</text><text x="679" y="202">Severovýchod</text><text x="828" y="203" transform="rotate(-5 828 203)">województwo</text><text x="830" y="212" transform="rotate(-5 830 212)">małopolskie</text><text x="884" y="199" transform="rotate(-8 884 199)">podkarp</text><text x="354" y="240" class="u">Lëtzebuerg</text><text x="671" y="233" class="u">Česko</text><text x="730" y="235">Střední Morava</text><text x="865" y="239" transform="rotate(-8 865 236)">Prešovský</text><text x="867" y="250">kraj</text><text x="619" y="257">Jihozápad</text><text x="693" y="256">Jihovýchod</text><text x="812" y="266" class="u">Slovensko</text><text x="342" y="287">Grand Est</text><text x="553" y="281">Bayern</text><text x="455" y="296">Baden-Württemberg</text><text x="612" y="320">Oberösterreich</text><text x="742" y="309" class="u">Bratislava</text><text x="872" y="334" transform="rotate(-6 872 334)">Alföld és</text><text x="873" y="343" transform="rotate(-6 873 343)">Észak</text><text x="654" y="341" class="u l">Österreich</text><text x="811" y="352" class="u l" transform="rotate(-6 811 352)">Magyarország</text><text x="528" y="369">Tirol</text><text x="663" y="364">Steiermark</text><text x="756" y="372" transform="rotate(-5 756 372)">Dunántúl</text><text x="432" y="381" class="u">Schweiz/</text><text x="432" y="393" class="u">Suisse/Svizzera/</text><text x="432" y="405" class="u">Svizra</text><text x="628" y="391">Kärnten</text><text x="655" y="421" class="u l">Slovenija</text><text x="323" y="356">gne</text><text x="321" y="366">he</text><text x="531" y="404" class="d">Trentino</text><text x="531" y="414" class="d">Alto Adige/</text><text x="531" y="424" class="d">Südtirol</text><text x="891" y="495" class="u">Срб</text><text x="349" y="523">Provence-</text><text x="349" y="532">Alpes-Côte</text><text x="349" y="542">d'Azur</text><text x="678" y="510" class="u">Hrvatska</text><text x="745" y="517" class="u">Bosna</text><text x="810" y="513" class="u">i Hercegovina</text><text x="792" y="536" class="u">Херцеговина</text><text x="536" y="567" class="f">Toscana</text><text x="838" y="580" class="u l">Crna Gora /</text><text x="841" y="593" class="u l">Црна Гора</text><text x="893" y="577" class="u">Ko</text><text x="890" y="522">Цен</text><text x="639" y="622" class="f">Abruzzo</text><text x="639" y="639" class="u l f">Italia</text><text x="759" y="686" class="f">Puglia</text><text x="877" y="612">Shqipëria</text><text x="878" y="621">veriore</text><text x="877" y="660" class="u l">Shqipëri</text><text x="788" y="738" class="w">Golfo</text><text x="789" y="748" class="w">di Taranto</text><text x="456" y="742" class="d">Sardegna</text><text x="760" y="782" class="f">Calabria</text><text x="664" y="871" class="d">Sicilia</text><text x="679" y="950" class="u l">Malta</text><text x="406" y="986">Tébessa</text><text x="405" y="1012">تبسة</text><text x="330" y="979" class="u">ⵀ.ⵜⵍⵍ</text><text x="345" y="1017" class="u">ⵍⵓⵔⴰⵙ</text>
          </g>
          <g class="title">
            <text x="448" y="245" textLength="317" lengthAdjust="spacingAndGlyphs">VACCINO Anti-COVID-19</text>
            <text x="354" y="276" textLength="506" lengthAdjust="spacingAndGlyphs">DOSI CONSEGNATE e SOMMINISTRATE</text>
            <text x="386.500" y="307" textLength="439" lengthAdjust="spacingAndGlyphs">Aggiornato al: 1/3/2021 1:04:06 PM</text>
          </g>
          <g class="val">
            <g font-size="13.800"><text x="442" y="458">138395</text><text x="442" y="474.500">15.988.391</text><text x="442" y="491">0,87%</text></g>
            <g font-size="15"><text x="546" y="444.500">105710</text><text x="546" y="461.500">11.618.220</text><text x="546" y="478.500">0,91%</text></g>
            <g font-size="9.200" letter-spacing="1.200"><text x="571.500" y="580">87660</text><text x="571.500" y="591">11.831.092</text><text x="571.500" y="602">0,74%</text></g>
            <g font-size="7.200" letter-spacing="-.1" stroke-width="1"><text x="714" y="688.500">88570</text><text x="714" y="696.500">13.707.269</text><text x="714" y="704">0,65%</text></g>
            <g font-size="15"><text x="562" y="789"  textLength="44.500">59365</text><text x="562" y="806" textLength="70">6.486.911</text><text x="562" y="823">0,92%</text></g>
          </g>
          <text class="credit" x="315" y="1000" textLength="187" lengthAdjust="spacingAndGlyphs">© PCM - ISTAT 2020 - OnData</text>
          <g class="maplegend">
            <rect x="759.500" y="388.500" width="121" height="178" fill="#fff" fill-opacity=".68"/>
            <text class="big" x="766" y="410" textLength="76" lengthAdjust="spacingAndGlyphs">LEGENDA</text>
            <text x="766" y="435" textLength="109" lengthAdjust="spacingAndGlyphs">% dosi consegnate</text>
            <g stroke="#777" stroke-opacity=".7"><rect x="766" y="442" width="19" height="11" fill="#f7fbf4"/><rect x="766" y="460" width="19" height="11" fill="#dff0d8"/><rect x="766" y="478" width="19" height="11" fill="#b8dfb0"/><rect x="766" y="496" width="19" height="11" fill="#91cf8f"/><rect x="766" y="514" width="19" height="11" fill="#62b577"/><rect x="766" y="532" width="19" height="11" fill="#43985f"/><rect x="766" y="550" width="19" height="11" fill="#3f6f4f"/></g>
            <g><text x="790" y="451" textLength="74" lengthAdjust="spacingAndGlyphs">0,6462 - 0,65</text><text x="790" y="469" textLength="52" lengthAdjust="spacingAndGlyphs">0,65 - 0,7</text><text x="790" y="487" textLength="52" lengthAdjust="spacingAndGlyphs">0,7 - 0,75</text><text x="790" y="505" textLength="53" lengthAdjust="spacingAndGlyphs">0,75 - 0,8</text><text x="790" y="523" textLength="54" lengthAdjust="spacingAndGlyphs">0,8 - 0,85</text><text x="790" y="541" textLength="53" lengthAdjust="spacingAndGlyphs">0,85 - 0,9</text><text x="790" y="560" textLength="64" lengthAdjust="spacingAndGlyphs">0,9 - 0,9152</text></g>
            <rect x="759.500" y="388.500" width="121" height="178" fill="none" stroke="#5a0f2c"/>
            <rect x="759.500" y="388.500" width="121" height="178" fill="none" stroke="#3aa0e0" stroke-dasharray="2 3"/>
            <g fill="#fff" stroke="#3b8fc8"><path d="M759.500 388.500h10v10h-10zM815.500 388.500h10v10h-10zM870.500 388.500h10v10h-10zM759.500 472.500h10v10h-10zM870.500 472.500h10v10h-10zM759.500 556.500h10v10h-10zM815.500 556.500h10v10h-10zM870.500 556.500h10v10h-10z"/></g>
          </g>
          <g class="made">
            <rect x="802.500" y="962.500" width="92" height="43" fill="#5b9a34"/><rect x="804" y="964" width="41" height="40" fill="#aad3df"/>
            <use href="#qlogo" x="804.500" y="963.500" width="41" height="41"/>
            <text x="893.500" y="974">made</text><text x="893.500" y="987">with</text><text x="894" y="1003" class="q" textLength="48" lengthAdjust="spacingAndGlyphs">QGIS</text>
          </g>
        </svg>
      </div>
    </section>

    <section class="dock">
      <div class="tabs"><span class="tab on t1">Oggetti</span><span class="tab t2">Storico dei Comandi</span></div>
      <div class="dockhead"><span>Oggetti</span><svg><use href="#float"/></svg><svg><use href="#closeb"/></svg></div>
      <div class="items">
        <div class="ihead">
          <span><svg width="20" height="16" viewBox="0 0 20 16"><path d="M1 8.500C5 3 14 3 18.500 8.500 14 13 6 13 1 8.500z" fill="#f5f5f5" stroke="#888"/><path d="M2 5C6 1 13 1 18 5" fill="none" stroke="#999"/><circle cx="10" cy="8" r="4" fill="#9a9c92" stroke="#666"/><circle cx="10" cy="8" r="1.800" fill="#111"/></svg></span>
          <span><svg width="18" height="20" viewBox="0 0 18 20"><path d="M4.500 10V6c0-6 9-6 9 0v4" fill="none" stroke="#888" stroke-width="2"/><rect x="1.500" y="9.500" width="15" height="10" rx="1" fill="#666"/></svg></span>
          <span>Oggetto</span>
        </div>
        <div class="irow"><b class="cb"><svg><use href="#check"/></svg></b><b class="cb"></b><svg class="ti"><use href="#t-leg"/></svg><strong>LEGENDA</strong></div>
        <div class="irow"><b class="cb"><svg><use href="#check"/></svg></b><b class="cb"></b><svg class="ti"><use href="#t-lab"/></svg><span class="expr">[%'© '|| 'PCM - ISTAT 202...</span></div>
        <div class="irow"><b class="cb"><svg><use href="#check"/></svg></b><b class="cb"></b><svg class="ti"><use href="#t-img"/></svg><span>&lt;Immagine&gt;</span></div>
        <div class="irow"><b class="cb"><svg><use href="#check"/></svg></b><b class="cb"></b><svg class="ti"><use href="#t-lab"/></svg><span class="tight">VACCINO Anti-COVID-19 DOS...</span></div>
        <div class="irow"><b class="cb"><svg><use href="#check"/></svg></b><b class="cb"></b><svg class="ti"><use href="#t-map"/></svg><span>Mappa 1</span></div>
      </div>
      <div class="split"><i></i></div>
      <div class="tabs"><span class="tab m1">Modello</span><span class="tab on m2">Proprietà dell'oggetto</span><span class="tab m3">Guide</span><span class="tab m4">Atlante</span></div>
      <div class="dockhead"><span>Proprietà dell'oggetto</span><svg><use href="#float"/></svg><svg><use href="#closeb"/></svg></div>
      <div class="kind">Legenda</div>
      <div class="scroll">
        <div class="props">
          <h3><svg><use href="#tri"/></svg>Proprietà Principali</h3>
          <div class="group g1">
            <label><u>T</u>itolo</label><div class="fieldrow"><div class="input">LEGENDA</div><svg width="27" height="20" viewBox="0 0 27 20"><path d="M6 2L1 9l5 7z" fill="#aaa" stroke="#777"/><path d="M6.500 1.500h13v16h-13zM6.500 9.500h13" fill="#fff" stroke="#888" stroke-width="1.300"/><path d="M9 5.500h8" stroke="#555" stroke-width="1.800"/><path d="M9 13h8" stroke="#999" stroke-width="1.300"/><path d="M17.500 13.500h9l-4.500 5z" fill="#555"/></svg></div>
            <label>Mappa</label><div class="combo"><svg class="ti"><use href="#t-map"/></svg><span>Mappa 1</span><svg class="tri"><use href="#tri"/></svg></div>
            <label>Testo a capo con</label><div class="input"></div>
            <label>Disposizione</label><div class="combo"><svg class="ti" viewBox="0 0 18 18"><path d="M1 1h5v4H1zM1 7h5v4H1zM1 13h5v4H1z" fill="#777"/></svg><span>Simboli sulla Sinistra</span><svg class="tri"><use href="#tri"/></svg></div>
            <div class="ck"><b class="cb"><svg><use href="#check"/></svg></b>Ridimensiona per adattare i contenuti</div>
          </div>
          <h3 class="second"><svg><use href="#tri"/></svg>Oggetti Legenda</h3>
          <div class="group g2">
            <div class="upd"><b class="cb"></b><span>Aggiorna automaticamente</span><div class="btn">Aggiorna Tutto</div></div>
            <div class="tree">
              <div class="node"><svg class="tri"><use href="#tri"/></svg><svg width="20" height="16" viewBox="0 0 20 16"><path d="M2 2C6 0 9 4 19 2c1 4 0 8-1 10-5-3-8-2-11 1-2 2-5 1-5.500-1C3 8 1 6 2 2z" fill="#ddd" stroke="#888"/></svg><span>% dosi consegnate</span></div>
              <div class="cls"><i class="c1"></i>0,6462 - 0,65</div><div class="cls"><i class="c2"></i>0,65 - 0,7</div><div class="cls"><i class="c3"></i>0,7 - 0,75</div><div class="cls"><i class="c4"></i>0,75 - 0,8</div><div class="cls"><i class="c5"></i>0,8 - 0,85</div><div class="cls"><i class="c6"></i>0,85 - 0,9</div><div class="cls"><i class="c7"></i>0,9 - 0,9152</div>
            </div>
            <div class="tbtns">
              <div><svg viewBox="0 0 16 16"><path d="M1 3h14L8 14z" fill="#6f9bd0" stroke="#365f94"/></svg></div>
              <div><svg viewBox="0 0 16 16"><path d="M1 13h14L8 2z" fill="#6f9bd0" stroke="#365f94"/></svg></div>
              <div><svg viewBox="0 0 16 16"><path d="M1.500 5.500h8v9h-8zM4.500 3.500h8v8h-8z" fill="none" stroke="#777"/><path d="M8 13V2M5.500 4.500L8 1.500l2.500 3" fill="none" stroke="#3d6593"/><rect x="10" y="10" width="5" height="5" fill="#bfe6bf" stroke="#5a8f5a"/></svg></div>
              <div><svg viewBox="0 0 16 16"><path d="M5.500 1.500h5v4h4v5h-4v4h-5v-4h-4v-5h4z" fill="#fff" stroke="#4e8a4e"/><path d="M8 3.500v9M3.500 8h9" stroke="#5a9a5a" stroke-width="1.800"/></svg></div>
              <div><svg viewBox="0 0 16 16"><rect x="1" y="5.500" width="14" height="5" fill="#fff" stroke="#e04040"/><path d="M3 8h10" stroke="#e86060" stroke-width="2"/></svg></div>
              <div><svg viewBox="0 0 16 16"><path d="M1.500 1.500h11v13h-11z" fill="#fafafa" stroke="#bbb"/><path d="M12 1l3 2-6 10-3 2 .3-4z" fill="#e3cf4a" stroke="#8a7c22" stroke-width=".8"/></svg></div>
              <div class="off">ε</div><div class="off">Σ</div>
              <div class="off push">ε<svg class="mini" viewBox="0 0 8 8"><path d="M0 8V2l2-2h1v8M5 8V0h1l2 2v6" fill="#ccc"/></svg></div><div class="off drop"><svg class="tri"><use href="#tri"/></svg></div>
            </div>
          </div>
        </div>
        <div class="sbar"><div class="sb"><svg class="tri up"><use href="#tri"/></svg></div><div class="thumb"></div><div class="sb end"><svg class="tri"><use href="#tri"/></svg></div></div>
      </div>
    </section>
  </main>
  <footer class="status">
    <span>1 oggetto selezionato</span><span>x: 267.278 mm</span><span>y: 132.38 mm</span><span>pagina: 1</span>
    <div class="zoom"><span>58.8%</span><svg class="tri"><use href="#tri"/></svg></div>
    <div class="slider"><i></i></div>
  </footer>
  <div class="desk"><i></i></div>
</div>
<script src="script.js"></script>
</body>
</html>
```
FILE: styles.css
```css
* { box-sizing: border-box; }
body { margin: 0; width: 1920px; height: 1080px; overflow: hidden; background: #f0f0f0; color: #111; font: 16px/20px Lato, "Noto Sans", sans-serif; letter-spacing: -.1px; white-space: nowrap; }
.defs { position: absolute; }
svg { display: block; flex: none; }
.window { display: flex; flex-direction: column; height: 1080px; }
.titlebar { height: 29px; background: #fff; display: flex; align-items: center; padding: 0 27px 2px 0; }
.applogo { width: 20px; height: 20px; margin: 0 4px 0 2px; }
.apptitle { flex: 1; }
.winbtn { width: 12px; height: 12px; margin-left: 46px; }
.menubar { height: 26px; border-bottom: 1px solid #d3d3d3; display: grid; grid-template-columns: 62px 76px 83px 65px 132px 65px 120px; align-items: center; padding: 0 0 1px 11px; }
u { text-underline-offset: 2px; }
.toolbar { height: 39px; border-bottom: 1px solid #aeaeae; background: linear-gradient(#fbfbfb, #efefef); display: flex; align-items: center; padding-left: 6px; }
.grip { width: 4px; height: 17px; flex: none; margin-right: 9px; background: radial-gradient(circle at 1px 1px, #b5b5b5 .8px, transparent 1px) 0 0 / 3px 3px; }
.grip.second { margin: 0 9px 0 4px; }
.grip.third { margin: 0 8px 0 5px; }
.ic { width: 24px; height: 24px; margin-right: 9.200px; }
.sep { width: 1px; height: 19px; background: #d8d8d8; margin-right: 7px; margin-left: -1px; }
.pagebox { width: 87px; height: 30px; margin: 0 4px 0 -4px; border: 1px solid #a9a9a9; border-radius: 3px; background: linear-gradient(90deg, #efefef 60px, #fafafa 60px); display: flex; align-items: center; justify-content: space-between; padding: 0 10px 0 4px; color: #7a7a7a; }
.tri { width: 9px; height: 6px; color: #5a5a5a; }
.tri.dim { color: #a3a3a3; }
.flip { transform: scaleX(-1); }
.faded { opacity: .35; filter: grayscale(1); }
.toolbar > .tri { margin: 0 9px 0 -3px; }
.main { height: 912px; display: flex; }
.tools { width: 39px; border-right: 1px solid #aeaeae; background: linear-gradient(90deg, #fcfcfc, #efefef); display: flex; flex-direction: column; align-items: center; padding: 6px 0 0 2px; }
.hgrip { width: 17px; height: 5px; margin-bottom: 3px; background: radial-gradient(circle at 1px 1px, #b5b5b5 .8px, transparent 1px) 0 0 / 3px 3px; }
.tools svg { width: 32px; height: 32.030px; padding: 4px; }
.tools .on { border: 1px solid #aaa; border-radius: 3px; background: #dadada; padding: 3px; height: 31px; margin-bottom: 1px; }
.view { width: 1112px; display: grid; grid-template: 24px 1fr / 25px 1fr; overflow: hidden; border-bottom: 1px solid #b4b4b4; }
.hruler { grid-column: 1 / 3; }
.vruler, .hruler { background: #f0f0f0; font: 11.500px "Noto Sans", sans-serif; }
.ticks { stroke: #3c3c3c; stroke-width: 1; shape-rendering: crispEdges; }
.marks { fill: #555; letter-spacing: 0; }
.canvas { background: #d7d7d7; padding: 31px 0 0 251px; overflow: hidden; border-right: 1px solid #b4b4b4; }
.sheet { box-shadow: 7px 7px 0 #959595; overflow: hidden; letter-spacing: 0; }
.road { fill: none; stroke: #f0a09e; stroke-width: 1; vector-effect: non-scaling-stroke; opacity: .9; }
.road.minor { stroke: #efb3a4; stroke-width: .8; opacity: .75; }
.border { fill: none; stroke: #a08aa6; stroke-width: 1.400; vector-effect: non-scaling-stroke; }
.border.thin { stroke: #b7a3b8; stroke-width: .9; }
.lake { fill: none; stroke: #9ccbe6; stroke-width: 3; vector-effect: non-scaling-stroke; }
.sea, .sea * { fill: none; stroke: #918fb5; stroke-width: 1.200; vector-effect: non-scaling-stroke; }
.reg { stroke: #3a463c; stroke-width: 2; }
.inner { fill: none; stroke: #2c5238; stroke-width: 1.500; opacity: .5; }
.inner.pale { stroke: #e6b9b0; opacity: .5; }
.islet { fill: #3f6f4f; stroke: #3f6f4f; stroke-width: 3; }
.cities { font: 8.800px "Noto Sans", sans-serif; fill: #4a4a4a; text-anchor: middle; stroke: #fff; stroke-opacity: .5; stroke-width: 1.500; paint-order: stroke; }
.places { font: italic 8.800px "Noto Sans", sans-serif; fill: #8a6590; text-anchor: middle; stroke: #fff; stroke-opacity: .45; stroke-width: 1.500; paint-order: stroke; }
.cities .l, .places .l { font-size: 10.500px; }
.places .u { font-style: normal; font-size: 9.700px; }
.places .u.l { font-size: 11px; }
.cities .d, .places .d { fill: #23402c; fill-opacity: .75; stroke: none; }
.cities .f, .places .f { fill: #8e9489; fill-opacity: .65; stroke: none; }
.places .w { fill: #6c9ec6; }
.title { font: 800 25px Inter, sans-serif; fill: #000; }
.val { font-family: "Open Sans", "Noto Sans", sans-serif; font-weight: 700; text-anchor: middle; fill: #000; stroke: #fff; stroke-width: 2.600; stroke-linejoin: round; paint-order: stroke; }
.credit { font: 700 12px Inter, sans-serif; fill: #000; }
.maplegend text { font: italic 11px Inter, sans-serif; fill: #111; }
.maplegend text.big { font-size: 15px; }
.made text { font: 700 12px Lato, sans-serif; fill: #e8f2f4; text-anchor: end; }
.made text.q { font-size: 16.500px; font-weight: 900; }
.dock { flex: 1; display: flex; flex-direction: column; padding-left: 7px; min-width: 0; }
.tabs { height: 35px; display: flex; align-items: flex-end; border-bottom: 1px solid #b0b0b0; }
.tab { height: 32px; background: #dedede; border: 1px solid #b0b0b0; border-left: 0; border-bottom: 0; display: flex; align-items: center; justify-content: center; padding: 1px 1px 0 0; }
.tab.on { height: 35px; margin-bottom: -1px; background: linear-gradient(#fcfcfc, #f1f1f1); border-left: 1px solid #b0b0b0; border-radius: 3px 3px 0 0; padding-bottom: 2px; }
.t1 { width: 81px; } .t2 { width: 170px; }
.m1 { width: 88px; border-left: 1px solid #b0b0b0; } .m2 { width: 182px; } .m3 { width: 71px; } .m4 { width: 80px; }
.dockhead { height: 24px; display: flex; align-items: center; gap: 3px; padding: 3px 2px 0 4px; }
.dockhead span { flex: 1; }
.dockhead svg { width: 11px; height: 11px; margin-top: -3px; }
.items { height: 171px; background: #fff; border: 1px solid #b0b0b0; }
.ihead { height: 25px; display: grid; grid-template-columns: 42px 42px 1fr; border-bottom: 1px solid #b0b0b0; background: linear-gradient(#fcfcfc, #eee); }
.ihead span { border-right: 1px solid #c6c6c6; padding: 2px 0 0 3px; }
.ihead span:nth-child(1) { padding-top: 4px; }
.irow { height: 23px; display: grid; grid-template-columns: 42px 43px 25px 1fr; align-items: center; padding-left: 3px; position: relative; top: -1px; }
.irow strong { letter-spacing: -.8px; }
.irow .tight { letter-spacing: -.85px; }
.irow .expr { letter-spacing: .02px; }
.cb { width: 17px; height: 17px; background: #fff; border: 1px solid #b4b4b4; flex: none; }
.cb svg { width: 17px; height: 17px; margin: -1px; }
.ti { width: 18px; height: 18px; }
.split { height: 7px; padding-top: 2px; }
.split i { display: block; margin: 0 auto; width: 17px; height: 2px; background: radial-gradient(circle at 1px 1px, #bbb .6px, transparent .8px) 0 0 / 3px 3px; }
.kind { height: 26px; background: #c8c8c8; border-bottom: 1px solid #b0b0b0; font-weight: 700; padding: 2px 0 0 6px; letter-spacing: -.3px; }
.scroll { flex: 1; min-height: 0; display: flex; border: 1px solid #b0b0b0; border-top: 0; }
.props { flex: 1; padding: 12px 11px 0 12px; overflow: hidden; }
h3 { margin: 0; font-size: 16px; line-height: 20px; height: 24px; display: flex; align-items: center; padding: 0 0 4px 2px; letter-spacing: -.12px; }
h3 svg { width: 11px; height: 8px; margin-right: 8px; color: #333; }
h3.second { margin-top: 7px; }
.group { border: 1px solid #d6d6d6; border-radius: 2px; background: #ececec; }
.g1 { height: 194px; display: grid; grid-template-columns: 120px 572px; grid-auto-rows: 28px; row-gap: 7px; align-items: center; padding: 12px; }
.fieldrow { display: flex; align-items: center; justify-content: space-between; }
.fieldrow .input { width: 535px; }
.fieldrow svg { margin-right: 2px; }
.input, .combo { height: 29px; border: 1px solid #a6a6a6; border-radius: 3px; background: #fff; padding: 3px; }
.combo { display: flex; align-items: center; padding: 0 10px 0 6px; background: linear-gradient(#fff, #ebebeb); }
.combo span { flex: 1; margin-left: 4px; }
.ck { grid-column: 1 / 3; display: flex; gap: 6px; align-items: center; }
.g2 { height: 340px; padding: 12px; border-bottom: 0; }
.upd { display: flex; align-items: center; gap: 6px; height: 28px; padding-bottom: 1px; }
.upd span { flex: 1; }
.btn { width: 118px; height: 28px; border: 1px solid #a6a6a6; border-radius: 3px; background: linear-gradient(#fff, #efefef); text-align: center; line-height: 27px; }
.tree { margin-top: 6px; width: 693px; height: 250px; background: #fff; border: 1px solid #b0b0b0; }
.node { height: 23px; display: flex; align-items: center; padding-left: 8px; }
.node .tri { margin-right: 11px; }
.node span { margin-left: 5px; }
.cls { height: 23px; display: flex; align-items: center; gap: 6px; padding-left: 53px; }
.cls i { width: 19px; height: 19px; border: 1px solid rgba(30,50,35,.7); }
.c1 { background: #f7fcf5; } .c2 { background: #dff3da; } .c3 { background: #b2e0ab; } .c4 { background: #7dc77e; } .c5 { background: #3fa75a; } .c6 { background: #157f3b; } .c7 { background: #00441b; }
.tbtns { display: flex; gap: 3px; margin-top: 6px; width: 693px; }
.tbtns div { width: 24px; height: 23px; border: 1px solid #a9a9a9; border-radius: 2px; background: linear-gradient(#fff, #efefef); display: flex; align-items: center; justify-content: center; font: 700 17px/20px "Liberation Serif", serif; }
.tbtns div > svg { width: 16px; height: 16px; }
.tbtns .off { border-color: #c8c8c8; color: #c3bfc6; }
.tbtns .push { margin-left: auto; }
.tbtns .mini { width: 7px; height: 7px; margin-top: 8px; }
.tbtns .drop { width: 15px; margin-left: -3px; }
.tbtns .drop .tri { width: 9px; height: 6px; color: #999; }
.sbar { width: 17px; border-left: 1px solid #b0b0b0; background: #e2e2e2; display: flex; flex-direction: column; }
.sb { height: 17px; background: #fbfbfb; border-bottom: 1px solid #b0b0b0; display: flex; align-items: center; justify-content: center; }
.sb.end { margin-top: auto; border-bottom: 0; border-top: 1px solid #b0b0b0; }
.up { transform: scaleY(-1); }
.thumb { height: 243px; background: linear-gradient(90deg, #fff, #f1f1f1); border-bottom: 1px solid #b0b0b0; }
.status { height: 33px; display: grid; grid-template-columns: 1243px 113px 106px 106px 238px 7px 99px; align-items: center; padding-left: 7px; }
.status span { padding-top: 2px; }
.zoom { width: 238px; height: 29px; margin-top: 2px; border: 1px solid #a6a6a6; border-radius: 3px; background: linear-gradient(90deg, #fff 212px, #f4f4f4 212px); display: flex; align-items: center; justify-content: space-between; padding: 0 10px 0 3px; }
.status .zoom span { padding: 0; }
.slider { grid-column: 7; height: 6px; border: 1px solid #b4b4b4; border-radius: 3px; background: linear-gradient(90deg, #5aa9f5 8px, #d4d4d4 8px); display: flex; align-items: center; }
.slider i { width: 16px; height: 16px; margin-left: 3px; border: 1px solid #a3a3a3; border-radius: 3px; background: #fff; flex: none; }
.desk { height: 2px; background: #444; padding-left: 415px; }
.desk i { display: block; width: 46px; height: 2px; background: #6a6a6a; }
```
FILE: script.js
```js
// Rulers: a tick every 5 mm, numbered every 20 mm.
const STEP = 55.56 / 4;

function buildRuler(id, length, thickness, origin, pointer, vertical) {
  let ticks = '';
  let marks = '';
  for (let n = -20; n < 70; n++) {
    const pos = Math.floor(origin + n * STEP) + 0.5;
    if (pos < (vertical ? 2 : 25) || pos > length) continue;
    const size = n % 4 === 0 ? thickness : n % 2 === 0 ? 8 : 5;
    ticks += vertical
      ? `M${thickness - size} ${pos}H${thickness}`
      : `M${pos} ${thickness - size}V${thickness}`;
    if (n % 4 === 0) {
      marks += vertical
        ? `<text transform="translate(15 ${pos + 4}) rotate(-90)" text-anchor="end">${n * 5}</text>`
        : `<text x="${pos + 1.5}" y="14">${n * 5}</text>`;
    }
  }
  const red = vertical ? `M0 ${pointer}H${thickness}` : `M${pointer} 0V${thickness}`;
  document.getElementById(id).innerHTML =
    `<path class="ticks" d="${ticks}"/><g class="marks">${marks}</g><path d="${red}" stroke="#f00"/>`;
}

buildRuler('hruler', 1111, 24, 276.4, 1019.5, false);
buildRuler('vruler', 888, 25, 31.4, 399.5, true);

// Secondary roads: short wandering lines from a fixed seed; the sea is painted over them.
let seed = 20210103;
const rand = () => (seed = (seed * 16807) % 2147483647) / 2147483647;
let roads = '';
for (let i = 0; i < 230; i++) {
  let x = rand() * 1510;
  let y = rand() * (i % 6 === 0 ? 2500 : 1250);
  let angle = rand() * 6.28;
  roads += `M${x.toFixed()} ${y.toFixed()}`;
  for (let k = 0; k < 6; k++) {
    angle += (rand() - 0.5) * 1.3;
    x += Math.cos(angle) * 22;
    y += Math.sin(angle) * 26;
    roads += `L${x.toFixed()} ${y.toFixed()}`;
  }
}
document.getElementById('minor').setAttribute('d', roads);
```
